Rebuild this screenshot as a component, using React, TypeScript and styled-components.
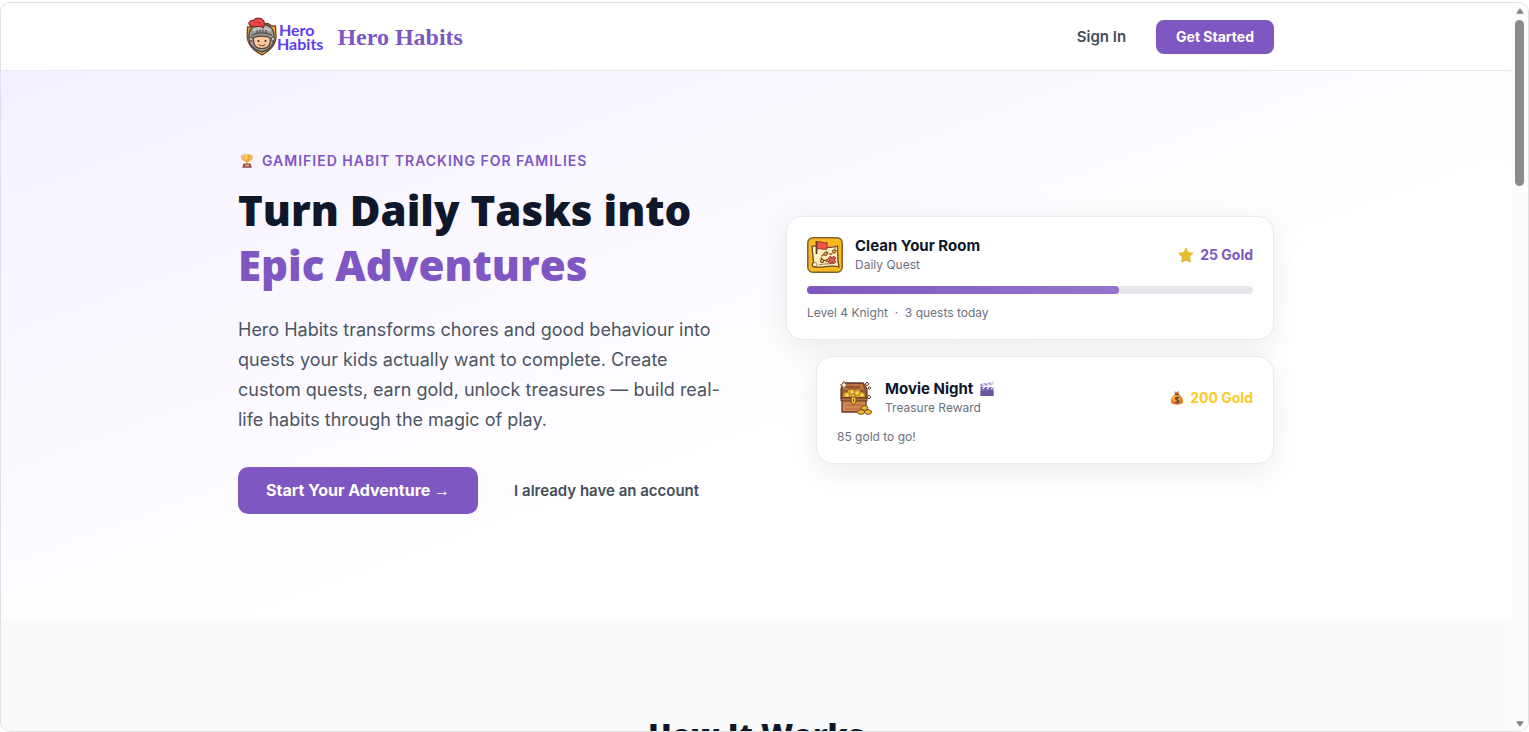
import React from "react";
import styled, { createGlobalStyle } from "styled-components";

const GlobalStyle = createGlobalStyle`
  *, *::before, *::after { box-sizing: border-box; }
  body {
    margin: 0;
    background: #fff;
    color: #0f172a;
    font-family: Inter, "Liberation Sans", sans-serif;
  }
  h1, h2, h3, p { margin: 0; }
`;

const Frame = styled.div`
  display: flex;
  height: calc(100vh - 2px);
  margin-top: 2px;
  border: 1px solid #e0e0e2;
  border-radius: 10px;
  overflow: hidden;
`;

const Page = styled.div`
  flex: 1;
  min-width: 0;
  overflow: hidden;
`;

const Container = styled.div`
  max-width: 1100px;
  margin: 0 auto;
  padding: 0 32px;
`;

const Header = styled.header`
  border-bottom: 1px solid #e8eaf0;
  background: #fff;
`;

const HeaderRow = styled(Container)`
  display: flex;
  align-items: center;
  justify-content: space-between;
  height: 67px;
`;

const Brand = styled.a`
  display: flex;
  align-items: center;
  gap: 14px;
  padding-left: 8px;
  text-decoration: none;
`;

const Logo = styled.span`
  display: flex;
  align-items: center;
  color: #5b3df5;
  font: 700 16px/14px Lato, sans-serif;
`;

const LogoText = styled.span`
  display: flex;
  flex-direction: column;
  > :first-child { padding-left: 2px; }
`;

const BrandName = styled.span`
  color: #7e57c2;
  font: 700 24px/32px "Liberation Serif", serif;
`;

const Nav = styled.nav`
  display: flex;
  align-items: center;
  gap: 30px;
`;

const NavLink = styled.a`
  color: #434d5b;
  font-size: 15px;
  font-weight: 600;
  line-height: 24px;
  text-decoration: none;
`;

const PrimaryButton = styled.button<{ $large?: boolean }>`
  border: 0;
  border-radius: ${(p) => (p.$large ? 10 : 8)}px;
  padding: 0 ${(p) => (p.$large ? 28 : 20)}px;
  background: #7e57c2;
  color: #fff;
  font-family: inherit;
  font-size: ${(p) => (p.$large ? 16 : 14)}px;
  font-weight: 700;
  line-height: ${(p) => (p.$large ? 47 : 34)}px;
  white-space: nowrap;
`;

const Arrow = styled.span`
  font-family: "Liberation Sans", sans-serif;
  font-weight: 400;
  line-height: 1;
`;

const Hero = styled.section`
  padding: 80px 0 105px;
  background: linear-gradient(160deg, #f5f0ff 0%, #ffffff 60%);
`;

const HeroGrid = styled(Container)`
  display: grid;
  grid-template-columns: 1fr 1fr;
  gap: 60px;
  align-items: center;
`;

const Eyebrow = styled.p`
  display: flex;
  align-items: center;
  gap: 6px;
  margin-bottom: 11px;
  color: #7e57c2;
  font-size: 14px;
  font-weight: 600;
  letter-spacing: 1px;
  line-height: 20px;
  text-transform: uppercase;
`;

const Headline = styled.h1`
  margin-bottom: 23px;
  font: 800 42px/55px "Open Sans", sans-serif;
  white-space: nowrap;
`;

const Accent = styled.span`
  display: block;
  color: #7e57c2;
`;

const Lead = styled.p`
  margin-bottom: 32px;
  color: #4b5563;
  font-size: 18px;
  line-height: 30px;
`;

const Actions = styled.div`
  display: flex;
  align-items: center;
  gap: 36px;
`;

const Cards = styled.div`
  display: flex;
  flex-direction: column;
  gap: 16px;
  padding-top: 14px;
`;

const Card = styled.article<{ $inset?: boolean }>`
  margin-left: ${(p) => (p.$inset ? 30 : 0)}px;
  padding: ${(p) => (p.$inset ? 22 : 19)}px 20px 17px;
  border: 1px solid #e9e9f0;
  border-radius: 16px;
  background: #fff;
  box-shadow: 0 8px 32px rgba(0, 0, 0, 0.08);
`;

const CardTop = styled.div`
  display: flex;
  align-items: center;
  gap: 12px;
`;

const CardText = styled.div`
  flex: 1;
`;

const CardTitle = styled.h3`
  display: flex;
  align-items: center;
  gap: 6px;
  font-size: 15px;
  font-weight: 700;
  line-height: 20px;
`;

const Muted = styled.p`
  color: #6b7280;
  font-size: 12px;
  line-height: 18px;
`;

const Gold = styled.span<{ $color: string }>`
  display: flex;
  align-items: center;
  gap: 6px;
  color: ${(p) => p.$color};
  font-size: 14px;
  font-weight: 700;
  line-height: 20px;
`;

const Track = styled.div`
  height: 8px;
  margin-top: 12px;
  border-radius: 4px;
  background: #e5e7eb;
`;

const Note = styled(Muted)`
  margin-top: 11px;

  ${Track} + && {
    margin-top: 10px;
  }
`;

const Fill = styled.div`
  height: 100%;
  border-radius: 4px;
  background: linear-gradient(90deg, #7e57c2, #9575cd);
`;

const HowSection = styled.section`
  padding: 94px 0;
  background: #f8fafc;
`;

const SectionTitle = styled.h2`
  font: 800 31px/44px "Open Sans", sans-serif;
  text-align: center;
`;

const Scrollbar = styled.div`
  display: flex;
  flex-direction: column;
  align-items: center;
  width: 17px;
  padding: 5px 0 4px;
  background: #fcfcfc;
`;

const Thumb = styled.div`
  width: 9px;
  height: 166px;
  margin: 6px 0 auto;
  border-radius: 5px;
  background: #8b8b8b;
`;

const KnightIcon = () => (
  <svg width="31" height="39" viewBox="0 0 31 39" aria-hidden="true">
    <path d="M1.500 10C3.500 10.500 6.500 9.500 8.500 7.500L22 6.500C24 8.500 27 9.500 29.500 9L30 20C29.500 29 23 33.500 16 38C8 34 2 29 1.200 20Z" fill="#f7a823" stroke="#69422f" strokeWidth="1.300" />
    <path d="M3 20C2.500 12 8 7 15.500 7S28.500 12 28 20L27 27L22 32.500L16 35L9 32.500L4 27Z" fill="#9b9998" stroke="#504848" strokeWidth="1.400" />
    <path d="M7 13.500C12 10.500 20 10.500 25 13.500" stroke="#c4c2c1" strokeWidth="3" fill="none" />
    <path d="M6 18.500C11 15 21 15 26 18.500" stroke="#55504e" strokeWidth="1.200" fill="none" />
    <path d="M11 13v3M14 12.500v3M17 12.500v3M20 13v3" stroke="#55504e" strokeWidth="1.100" />
    <path d="M7.500 21C10 18.500 21 18.500 24 21C25 28 22 31.500 15.800 31.500S7 28 7.500 21Z" fill="#ffc9a0" stroke="#5b423a" strokeWidth="1.200" />
    <circle cx="12.500" cy="24" r="1.100" fill="#3c2b2a" />
    <circle cx="19.500" cy="24" r="1.100" fill="#3c2b2a" />
    <path d="M12.500 27C14 29.500 18 29.500 19.500 27" stroke="#653a2e" fill="none" />
    <circle cx="5" cy="22" r="2" fill="#c6c4c2" stroke="#504848" />
    <circle cx="27" cy="22" r="2" fill="#c6c4c2" stroke="#504848" />
    <path d="M4 8C1 6 4.500 3 7.500 3.500C9 .5 15 0 17.500 3.500C19 6 18.500 8.500 17 11C14.500 7.500 10 11 7 9C5.500 9.500 3.500 9.500 4 8Z" fill="#ef4648" stroke="#7d2d32" strokeWidth="1.200" />
    <path d="M8 6C12 4 15 6 16.500 9" stroke="#b82e3b" fill="none" />
  </svg>
);

const TrophyIcon = () => (
  <svg width="18" height="14" viewBox="0 0 18 14" aria-hidden="true">
    <path d="M5.500 2H3.800C3.800 5 5 6.200 7 6.500M12.500 2h1.700c0 3-1.200 4.200-3.200 4.500" stroke="#e99b3a" strokeWidth="1.200" fill="none" />
    <path d="M5.300.5h7.400C13 5 11.500 7.800 9.700 8.200V10H8.300V8.200C6.500 7.800 5 5 5.300.5Z" fill="#f6a52c" />
    <path d="M6.500 1h3C10 4 9 6 8 7C6.800 5.500 6.300 3.500 6.500 1Z" fill="#ffd262" />
    <path d="M5.500 9.500h7l1.300 4.200H4.200Z" fill="#92504f" />
    <path d="M7 10.800h4v1.500H7Z" fill="#f0b354" />
  </svg>
);

const MapIcon = () => (
  <svg width="36" height="36" viewBox="0 0 36 36" aria-hidden="true">
    <rect x=".8" y=".8" width="34.400" height="34.400" rx="5" fill="#fbb91f" stroke="#80602f" strokeWidth="1.500" />
    <path d="M5 9.500C12 7 20 13 30.500 9L31 25L32 30C23 27 15 32 6 29.500C4 28 6 26 6.500 25Z" fill="#fff0bd" stroke="#684731" strokeWidth="1.300" />
    <path d="M6 26C9 24.500 11 27 9.500 29.500M28 10v4l3-1M12 28c5-1.500 10-1 14-1.500" fill="none" stroke="#9c774c" />
    <path d="M19 14.500C23 19 26 17 27 14.500M17 17.500C12 20 14 24 20 23.500" fill="none" stroke="#684731" strokeWidth="1.300" strokeDasharray="3 1" />
    <g fill="#f6b027" stroke="#684731"><circle cx="18.500" cy="17" r="1.700" /><circle cx="27" cy="14.500" r="1.700" /><circle cx="15" cy="24" r="1.700" /><circle cx="20" cy="23.500" r="1.300" /></g>
    <path d="M9.500 4V17" stroke="#59402e" strokeWidth="1.700" />
    <path d="M10 5C14 3.500 16 7 20 5.500V12C16 13.500 14 10.500 10 12Z" fill="#f45448" stroke="#8b3932" />
    <path d="M22 20L28 26M28 20L22 26" stroke="#71362f" strokeWidth="3.600" />
    <path d="M22 20L28 26M28 20L22 26" stroke="#ed5148" strokeWidth="2.200" />
  </svg>
);

const ChestIcon = () => (
  <svg width="36" height="36" viewBox="0 0 36 36" aria-hidden="true">
    <path d="M6 3H26L30 9V18H4V9Z" fill="#975531" stroke="#643b2d" strokeWidth="1.300" />
    <path d="M7 5H25L26 9H6M8 4v5M24 4v5" fill="none" stroke="#c97a43" strokeWidth="1.300" />
    <path d="M6 18C5 14 7 11 10 12C11 8 15 8 17 10C20 8 24 9 24 12C28 12 29 15 28 18Z" fill="#f3bb2b" stroke="#7a5025" />
    <g fill="#ffd34a" stroke="#946424" strokeWidth=".7"><circle cx="10" cy="15" r="2.500" /><circle cx="15" cy="12" r="2.500" /><circle cx="20" cy="13" r="2.500" /><circle cx="25" cy="15" r="2.500" /><circle cx="16" cy="16" r="2" /></g>
    <path d="M5 18H29V32H5Z" fill="#d58350" stroke="#643b2d" strokeWidth="1.300" />
    <path d="M4 18H30V21H4Z" fill="#b56a3c" stroke="#643b2d" />
    <path d="M9 25h16M9 29h16" stroke="#b4683e" />
    <path d="M14 17H19V22L16.500 25L14 22Z" fill="#efc440" stroke="#704824" />
    <path d="M16.500 19v3" stroke="#704824" />
    <g fill="#f2b92e" stroke="#76502a"><ellipse cx="27.500" cy="28" rx="3.500" ry="2.300" /><ellipse cx="24" cy="32" rx="3.500" ry="2.300" /><ellipse cx="31" cy="32" rx="3.500" ry="2.300" /></g>
    <path d="M7 1L8.200 4L11 5L8.200 6L7 9L5.800 6L3 5L5.800 4Z" fill="#fff5dd" stroke="#8a6952" strokeWidth=".7" />
    <path d="M28 4l2-2 2 2-2 2zM31 8l1.500-1.500L34 8l-1.500 1.500zM30 17l2-2 2 2-2 2z" fill="#f6d5b0" stroke="#6e4939" />
  </svg>
);

const StarIcon = () => (
  <svg width="16" height="16" viewBox="0 0 16 16" aria-hidden="true">
    <path d="M8 1.200L10.200 5.500L15 6.200L11.600 9.600L12.400 14.600L8 12.600L3.600 14.600L4.400 9.600L1 6.200L5.800 5.500Z" fill="#e9bc32" stroke="#e9bc32" strokeLinejoin="round" />
    <path d="M3.600 14.800L8 12.800L12.400 14.800M1 6.500L4.200 9.500" stroke="#cb941f" fill="none" strokeWidth=".8" />
  </svg>
);

const ClapperIcon = () => (
  <svg width="16" height="16" viewBox="0 0 16 16" aria-hidden="true">
    <path d="M1.500 6H14.500V15H1.500Z" fill="#7965ad" />
    <path d="M1.500 10H14.500V15H1.500Z" fill="#68539c" />
    <path d="M1 3L14 .7L14.600 3.200L1.500 6Z" fill="#a99ad0" />
    <path d="M3.500 2.600L6 5M7.500 1.900L10 4.200M11.500 1.200L14 3.300M3.500 8L5.500 6M8 8L10 6M12 8L14 6" stroke="#eee9fa" strokeWidth="1.400" />
  </svg>
);

const MoneyBagIcon = () => (
  <svg width="14" height="16" viewBox="0 0 14 16" aria-hidden="true">
    <path d="M4.500 1.500L6.500 2L9 1.300L8.500 5H5.200Z" fill="#c77a3b" />
    <path d="M5 4.500H9C12 6.500 13.500 9.500 13 12C12.500 15.500 1.500 15.500 1 12C.5 9.500 2 6.500 5 4.500Z" fill="#df7d32" />
    <ellipse cx="6" cy="8.500" rx="4" ry="3.500" fill="#f6a736" />
    <path d="M4.800 4.500H9.200" stroke="#7c4532" strokeWidth="1.200" />
    <path d="M9 8C8 7 5.500 7.200 5.500 8.700S9 9.800 9 11.300S6 13 5 11.800M7.200 6.500V13.500" stroke="#704331" strokeWidth="1.200" fill="none" />
  </svg>
);

const ScrollArrow = ({ down }: { down?: boolean }) => (
  <svg width="8" height="6" viewBox="0 0 8 6" aria-hidden="true">
    <path d={down ? "M.8 .8H7.200L4 5.200Z" : "M.8 5.200H7.200L4 .8Z"} fill="#858585" stroke="#858585" strokeLinejoin="round" />
  </svg>
);

export default function App() {
  return (
    <>
      <GlobalStyle />
      <Frame>
        <Page>
          <Header>
            <HeaderRow>
              <Brand href="#">
                <Logo>
                  <KnightIcon />
                  <LogoText>
                    <span>Hero</span>
                    <span>Habits</span>
                  </LogoText>
                </Logo>
                <BrandName>Hero Habits</BrandName>
              </Brand>
              <Nav>
                <NavLink href="#signin">Sign In</NavLink>
                <PrimaryButton>Get Started</PrimaryButton>
              </Nav>
            </HeaderRow>
          </Header>
          <main>
            <Hero>
              <HeroGrid>
                <div>
                  <Eyebrow>
                    <TrophyIcon />
                    Gamified habit tracking for families
                  </Eyebrow>
                  <Headline>
                    Turn Daily Tasks into <Accent>Epic Adventures</Accent>
                  </Headline>
                  <Lead>
                    Hero Habits transforms chores and good behaviour into quests your kids actually want
                    to complete. Create custom quests, earn gold, unlock treasures — build real-life
                    habits through the magic of play.
                  </Lead>
                  <Actions>
                    <PrimaryButton $large>
                      Start Your Adventure <Arrow>→</Arrow>
                    </PrimaryButton>
                    <NavLink href="#login">I already have an account</NavLink>
                  </Actions>
                </div>
                <Cards>
                  <Card>
                    <CardTop>
                      <MapIcon />
                      <CardText>
                        <CardTitle>Clean Your Room</CardTitle>
                        <Muted>Daily Quest</Muted>
                      </CardText>
                      <Gold $color="#7e57c2">
                        <StarIcon />
                        25 Gold
                      </Gold>
                    </CardTop>
                    <Track>
                      <Fill style={{ width: "70%" }} />
                    </Track>
                    <Note>Level 4 Knight &nbsp;·&nbsp; 3 quests today</Note>
                  </Card>
                  <Card $inset>
                    <CardTop>
                      <ChestIcon />
                      <CardText>
                        <CardTitle>
                          Movie Night
                          <ClapperIcon />
                        </CardTitle>
                        <Muted>Treasure Reward</Muted>
                      </CardText>
                      <Gold $color="#ffca28">
                        <MoneyBagIcon />
                        200 Gold
                      </Gold>
                    </CardTop>
                    <Note>85 gold to go!</Note>
                  </Card>
                </Cards>
              </HeroGrid>
            </Hero>
            <HowSection>
              <Container>
                <SectionTitle>How It Works</SectionTitle>
              </Container>
            </HowSection>
          </main>
        </Page>
        <Scrollbar aria-hidden="true">
          <ScrollArrow />
          <Thumb />
          <ScrollArrow down />
        </Scrollbar>
      </Frame>
    </>
  );
}
